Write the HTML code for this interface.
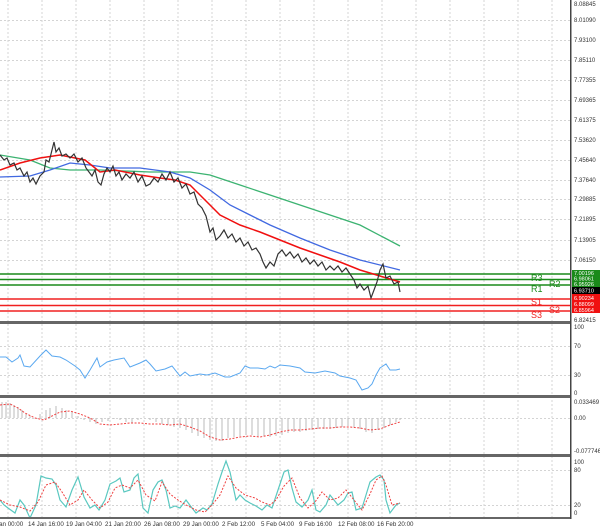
<!DOCTYPE html><html><head><style>body{margin:0;background:#fff}svg{display:block;font-family:"Liberation Sans",sans-serif}</style></head><body>
<svg width="600" height="529" viewBox="0 0 600 529">
<rect width="600" height="529" fill="#fff"/>
<g stroke="#d4d4d4" stroke-dasharray="2,2" stroke-width="1">
<path d="M8 0V518M42 0V518M76 0V518M110 0V518M144 0V518M178 0V518M212 0V518M246 0V518M280 0V518M314 0V518M348 0V518M382 0V518M416 0V518M450 0V518M484 0V518M518 0V518M552 0V518"/>
<path d="M0 20.5H571M0 40.5H571M0 60.5H571M0 80.5H571M0 100.5H571M0 120.5H571M0 140.5H571M0 160.5H571M0 180.5H571M0 199.5H571M0 219.5H571M0 240.5H571M0 260.5H571M0 346.5H571M0 375.5H571M0 418.5H571M0 470.5H571M0 505.5H571"/>
</g>
<g stroke-width="1.5">
<path d="M0 274H571M0 279.5H571M0 285H571" stroke="#1a8a1a"/>
<path d="M0 299H571M0 305.5H571M0 311H571" stroke="#f02020"/>
</g>
<g font-size="9" fill="#1a8a1a"><text x="531" y="281">R3</text><text x="549" y="287">R2</text><text x="531" y="292">R1</text></g>
<g font-size="9" fill="#f02020"><text x="531" y="305">S1</text><text x="549" y="313">S2</text><text x="531" y="318">S3</text></g>
<polyline fill="none" stroke="#3cb371" stroke-width="1.3" points="0,155 30,160 50,168 70,170 100,170 150,172 190,172 210,175 240,185 270,195 300,205 330,215 360,225 400,246"/>
<polyline fill="none" stroke="#4169e1" stroke-width="1.3" points="0,177 30,176 50,170 70,163 90,165 110,168 140,168 170,172 190,178 210,190 230,205 250,215 270,225 300,238 330,250 360,260 400,270"/>
<polyline fill="none" stroke="#f01010" stroke-width="1.5" points="0,170 20,163 40,158 60,155 85,160 100,172 115,170 140,175 160,178 175,180 190,185 205,200 220,215 240,225 260,232 280,240 300,248 320,255 340,262 360,270 380,276 400,282"/>
<polyline fill="none" stroke="#333" stroke-width="1.2" points="0,155 4,160 7,158 10,165 14,163 17,170 20,168 24,176 27,172 30,182 33,178 36,184 40,176 44,172 46,160 49,162 52,150 54,142 56,152 59,148 62,156 66,154 70,158 74,154 78,162 82,158 86,168 89,172 92,176 95,170 98,182 101,185 104,174 107,168 110,172 113,166 116,176 119,172 122,180 126,174 130,178 134,172 138,182 142,176 146,186 150,184 154,178 158,182 162,174 166,180 170,172 174,182 178,178 182,188 186,184 190,194 194,192 198,204 202,208 206,216 210,232 213,228 216,240 220,236 224,230 228,238 232,234 236,242 240,238 244,246 248,242 252,250 256,248 260,254 263,262 266,268 270,262 274,266 278,254 282,250 286,256 290,252 294,258 298,254 302,262 306,258 310,264 314,260 318,266 322,262 326,270 330,266 334,270 338,266 342,272 346,268 350,274 354,280 357,288 360,284 364,290 368,286 371,298 374,290 377,282 380,270 383,264 386,278 390,276 394,284 398,282 400,292"/>
<polyline fill="none" stroke="#5aa8f0" stroke-width="1" points="0,357 6,357 12,362 18,358 20,355 24,366 30,367 40,356 46,350 52,356 60,357 66,360 75,366 80,370 85,378 90,370 97,358 100,367 107,362 114,360 124,358 130,367 140,363 146,360 150,364 156,371 165,369 172,366 180,376 185,372 190,376 200,374 207,375 215,373 225,377 230,377 240,373 245,366 250,368 258,368 265,369 270,366 275,368 280,365 290,366 300,368 305,372 315,373 325,371 335,373 340,376 350,378 356,380 362,390 368,388 372,384 376,375 380,368 386,364 390,370 396,370 400,369"/>
<g stroke="#bbb" stroke-width="1">
<path d="M2 418V402M6 418V402M10 418V403M14 418V405M18 418V407M22 418V410M26 418V413M30 418V416M34 418V418M40 418V414M46 418V410M50 418V408M56 418V406M62 418V408M66 418V410M72 418V412M78 418V416M84 418V420M90 418V422M96 418V424M102 418V422M108 418V421M114 418V419M120 418V420M126 418V422M132 418V423M138 418V420M144 418V418M150 418V420M156 418V422M162 418V424M168 418V425M174 418V427M180 418V428M186 418V430M192 418V433M198 418V436M204 418V438M210 418V440M216 418V441M222 418V441M228 418V438M234 418V437M240 418V436M246 418V435M252 418V435M258 418V436M264 418V436M270 418V437M276 418V436M282 418V435M288 418V433M294 418V432M300 418V432M306 418V431M312 418V430M318 418V429M324 418V429M330 418V429M336 418V428M342 418V427M348 418V426M354 418V427M360 418V429M366 418V432M372 418V433M378 418V430M384 418V428M390 418V425M396 418V422M400 418V420"/>
</g>
<polyline fill="none" stroke="#f04040" stroke-dasharray="2,1.5" stroke-width="1" points="0,405 10,404 18,408 25,413 35,418 44,420 52,416 60,412 70,411 80,414 90,418 100,424 110,425 120,424 130,423 140,423 150,424 160,424 170,425 180,424 190,427 200,431 210,437 220,440 230,439 240,437 250,436 260,437 270,435 280,432 290,430 300,430 310,429 320,428 330,428 340,427 350,427 360,428 370,430 380,429 390,425 400,422"/>
<polyline fill="none" stroke="#5ac8c0" stroke-width="1.2" points="0,500 4,505 8,508 15,513 20,500 24,505 30,518 36,505 41,476 46,478 52,479 56,485 60,500 66,507 72,490 78,477 84,497 90,508 95,505 99,510 105,500 110,484 116,481 120,478 124,492 130,490 134,478 138,474 143,508 148,513 153,490 158,482 162,480 166,490 170,508 175,506 180,508 186,500 192,508 196,513 203,508 207,510 212,504 218,484 222,472 226,461 230,472 236,500 240,495 245,500 250,503 256,506 262,510 267,505 272,508 280,484 284,472 288,470 292,488 296,502 302,507 308,500 312,490 316,510 320,512 326,505 330,495 334,500 338,505 344,500 348,493 352,492 356,510 362,508 366,495 370,482 376,477 380,475 384,480 386,500 390,513 396,505 400,503"/>
<polyline fill="none" stroke="#f04040" stroke-dasharray="2,1.5" stroke-width="1" points="0,500 10,505 20,507 30,511 38,502 46,485 55,482 62,492 70,505 78,500 84,490 92,500 100,508 108,502 115,488 122,485 130,488 138,480 146,495 155,501 162,482 170,494 178,500 186,505 196,510 205,512 212,505 220,495 228,476 236,488 245,495 255,498 262,502 270,505 276,500 284,486 292,478 300,498 308,508 315,502 322,492 330,500 338,498 346,490 354,500 362,510 370,494 376,480 382,476 386,485 392,505 400,503"/>
<g fill="#666"><rect x="0" y="321" width="571" height="3"/><rect x="0" y="395" width="571" height="3"/><rect x="0" y="454" width="571" height="3"/><rect x="0" y="517" width="571" height="2"/></g>
<rect x="570" y="0" width="1.5" height="519" fill="#444"/>
<g font-size="6" fill="#333">
<text x="574" y="6">8.08845</text><text x="574" y="22">8.01090</text><text x="574" y="42">7.93100</text><text x="574" y="62">7.85110</text><text x="574" y="82">7.77355</text><text x="574" y="102">7.69365</text><text x="574" y="122">7.61375</text><text x="574" y="142">7.53620</text><text x="574" y="162">7.45640</text><text x="574" y="182">7.37640</text><text x="574" y="201">7.29885</text><text x="574" y="221">7.21895</text><text x="574" y="242">7.13905</text><text x="574" y="262">7.06150</text><text x="574" y="322">6.82415</text>
<text x="574" y="329">100</text><text x="574" y="348">70</text><text x="574" y="377">30</text><text x="574" y="395">0</text>
<text x="574" y="404">0.033469</text><text x="574" y="420">0.00</text><text x="574" y="453">-0.077746</text>
<text x="574" y="464">100</text><text x="574" y="472">80</text><text x="574" y="507">20</text><text x="574" y="515">0</text>
</g>
<rect x="572" y="270" width="28" height="17" fill="#1a8a1a"/><rect x="572" y="287" width="28" height="7" fill="#000"/><rect x="572" y="294" width="28" height="19" fill="#f01010"/>
<g font-size="5.5" fill="#fff"><text x="574" y="275">7.00196</text><text x="574" y="280.5">6.98061</text><text x="574" y="286">6.95926</text><text x="574" y="292.5">6.93710</text><text x="574" y="300">6.90234</text><text x="574" y="306">6.88099</text><text x="574" y="312">6.85964</text></g>
<g font-size="6.2" fill="#333">
<text x="-4" y="526">Jan 00:00</text><text x="28" y="526">14 Jan 16:00</text><text x="66" y="526">19 Jan 04:00</text><text x="105" y="526">21 Jan 20:00</text><text x="144" y="526">26 Jan 08:00</text><text x="183" y="526">29 Jan 00:00</text><text x="222" y="526">2 Feb 12:00</text><text x="261" y="526">5 Feb 04:00</text><text x="299" y="526">9 Feb 16:00</text><text x="338" y="526">12 Feb 08:00</text><text x="377" y="526">16 Feb 20:00</text>
</g>
</svg></body></html>
